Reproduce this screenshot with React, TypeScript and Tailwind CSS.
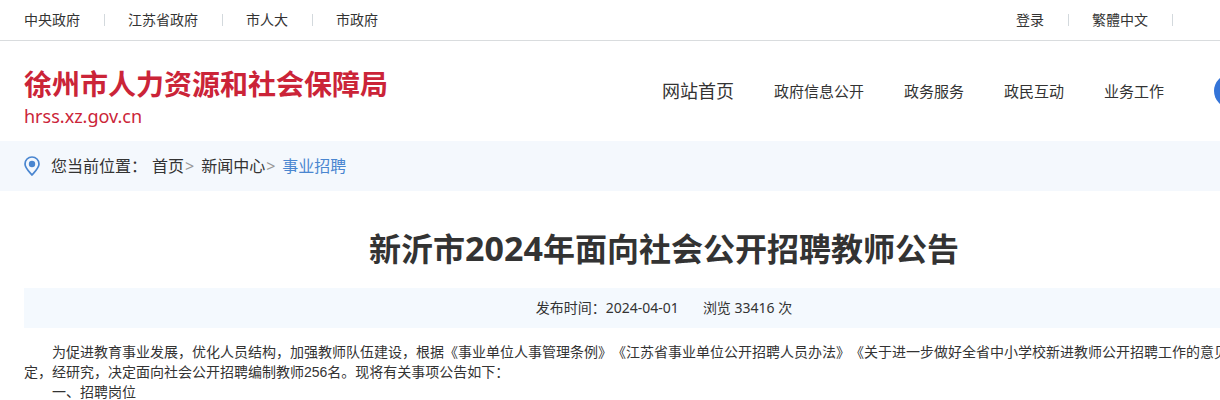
import { Fragment } from 'react'

const GOV_LINKS = ['中央政府', '江苏省政府', '市人大', '市政府']
const USER_LINKS = ['登录', '繁體中文']
const NAV_LINKS = ['政府信息公开', '政务服务', '政民互动', '业务工作']

const Divider = () => <span className="-mr-px h-3 w-px bg-[#d3d9dd]" />

function TopBar() {
  return (
    <div className="border-b border-[#d9dcde]">
      <div className="mx-6 flex h-10 w-[1280px] items-center justify-between text-sm">
        <div className="flex items-center gap-6">
          {GOV_LINKS.map((label, i) => (
            <Fragment key={label}>
              {i > 0 && <Divider />}
              <a href="#">{label}</a>
            </Fragment>
          ))}
        </div>
        <div className="flex items-center gap-6 pr-[132px]">
          {USER_LINKS.map(label => (
            <Fragment key={label}>
              <a href="#">{label}</a>
              <Divider />
            </Fragment>
          ))}
        </div>
      </div>
    </div>
  )
}

function Header() {
  return (
    <header className="mx-6 flex h-[100px] w-[1280px] items-center justify-between">
      <a href="#" className="pt-[10px] text-[#cb2438]">
        <div className="text-[28px] leading-10 font-bold">徐州市人力资源和社会保障局</div>
        <div className="text-lg leading-6">hrss.xz.gov.cn</div>
      </a>
      <nav className="flex items-center gap-10 text-[15px] leading-5">
        <a href="#" className="text-lg">网站首页</a>
        {NAV_LINKS.map(label => (
          <a key={label} href="#">{label}</a>
        ))}
        <button type="button" aria-label="搜索" className="ml-[10px] h-[34px] w-[90px] rounded-full bg-[#3474d8]" />
      </nav>
    </header>
  )
}

function Breadcrumb() {
  return (
    <div className="bg-[#f4f8fd]">
      <div className="mx-6 flex h-[50px] w-[1280px] items-center text-base">
        <svg width="16" height="20" viewBox="0 0 16 20" fill="none" className="mr-[11px]">
          <path d="M8 19C5.8 16.4 1 11.8 1 7.9C1 4 4.1 1 8 1s7 3 7 6.9C15 11.8 10.2 16.4 8 19Z" stroke="#4a86d0" strokeWidth="1.7" strokeLinejoin="round" />
          <circle cx="8" cy="8" r="3.2" fill="#4a86d0" />
        </svg>
        <span className="mr-[5px]">您当前位置：</span>
        <a href="#">首页</a>
        <span className="mr-[7px] ml-px text-[#999]">&gt;</span>
        <a href="#">新闻中心</a>
        <span className="mr-[7px] ml-px text-[#999]">&gt;</span>
        <a href="#" className="text-[#4a86d0]">事业招聘</a>
      </div>
    </div>
  )
}

function Article() {
  return (
    <main className="mx-6 w-[1280px] pt-8">
      <h1 className="mb-[14px] text-center text-[32px] leading-[51px] font-bold">
        新沂市<span className="text-[34px]">2024</span>年面向社会公开招聘教师公告
      </h1>
      <div className="flex h-10 items-center justify-center gap-6 bg-[#f4f9fe] text-sm">
        <span>发布时间：2024-04-01</span>
        <span>浏览 33416 次</span>
      </div>
      <div className="mt-[14px] font-['Liberation_Sans','Noto_Sans_CJK_SC',sans-serif] text-sm leading-5 [text-spacing-trim:space-all]">
        <p className="indent-[2em]">
          为促进教育事业发展，优化人员结构，加强教师队伍建设，根据《事业单位人事管理条例》《江苏省事业单位公开招聘人员办法》《关于进一步做好全省中小学校新进教师公开招聘工作的意见》等有关规定，经研究，决定面向社会公开招聘编制教师256名。现将有关事项公告如下：
        </p>
        <p className="indent-[2em]">一、招聘岗位</p>
      </div>
    </main>
  )
}

export default function App() {
  return (
    <div lang="zh-CN" className="overflow-x-hidden bg-white font-['Noto_Sans','Noto_Sans_CJK_SC',sans-serif] text-[#333]">
      <TopBar />
      <Header />
      <Breadcrumb />
      <Article />
    </div>
  )
}
